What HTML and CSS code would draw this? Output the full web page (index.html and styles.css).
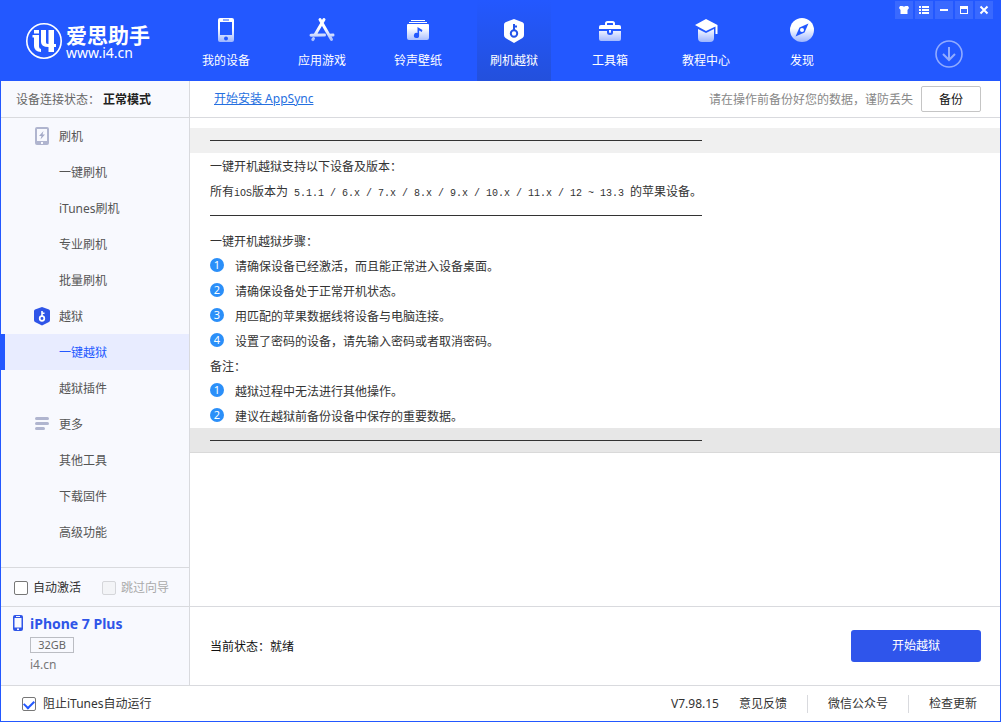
FILE: index.html
```html
<!DOCTYPE html>
<html lang="zh-CN">
<head>
<meta charset="utf-8">
<title>爱思助手</title>
<link rel="stylesheet" href="styles.css">
</head>
<body>
<div class="app">
  <header class="header">
    <div class="brand">
      <svg class="brand-mark" width="38" height="38" viewBox="0 0 38 38" fill="none" aria-hidden="true">
        <circle cx="19" cy="19" r="17.2" stroke="#fff" stroke-width="1.6"/>
        <path fill="#fff" d="M9 8h5v3.500H9zM7.500 13H14v11.500q0 2 2 2.500v3q-7-.500-7-6V15.500H7.500zM16 8h5v12.500q0 1.500 2.500 1.500V8H29v14h2v3h-2v5h-5.500v-5Q16 25 16 20z"/>
      </svg>
      <div class="brand-text">
        <span class="brand-name">爱思助手</span>
        <span class="brand-site">www.i4.cn</span>
      </div>
    </div>
    <nav class="tabs">
      <a class="tab" href="#device">
        <svg width="26" height="26" viewBox="0 0 26 26" aria-hidden="true">
          <defs><linearGradient id="fade" gradientUnits="userSpaceOnUse" x1="0" y1="2" x2="0" y2="25"><stop offset=".4" stop-color="#fff"/><stop offset="1" stop-color="#9db5ff"/></linearGradient></defs>
          <path fill="url(#fade)" fill-rule="evenodd" d="M7 1h12q2 0 2 2v20q0 2-2 2H7q-2 0-2-2V3q0-2 2-2zM7 5v13h12V5zM10 2.500v1h6v-1zM13 19.500a2 2 0 1 0 0 4a2 2 0 1 0 0-4z"/>
        </svg>
        <span>我的设备</span>
      </a>
      <a class="tab" href="#apps">
        <svg width="26" height="26" viewBox="0 0 26 26" fill="none" stroke="url(#fade)" stroke-width="3" stroke-linecap="round" aria-hidden="true">
          <path d="M15 2.500L6.500 17M11 2.500L22.500 22.500M4.500 21.500L3.800 22.600M2 18.200L15.500 18.100M20.500 18.200L24 18.100"/>
        </svg>
        <span>应用游戏</span>
      </a>
      <a class="tab" href="#ringtones">
        <svg width="26" height="26" viewBox="0 0 26 26" fill="url(#fade)" aria-hidden="true">
          <path d="M6 3h14v1H6zM4 5h18v1H4z"/>
          <path fill-rule="evenodd" d="M3 7h20q1 0 1 1v13q0 2-2 2H4q-2 0-2-2V8q0-1 1-1zM12.500 10v6.100a2.600 2.600 0 1 0 1.600 2.400v-5l2.800 1.500l.500-2z"/>
        </svg>
        <span>铃声壁纸</span>
      </a>
      <a class="tab tab-active" href="#flash" aria-current="page">
        <svg width="26" height="26" viewBox="0 0 26 26" aria-hidden="true">
          <path fill="#fff" d="M13 2l8.500 3.200Q23 6 23 7.500V18q0 2-1.500 3L13 26L4.500 21Q3 20 3 18V7.500Q3 6 4.500 5.200z"/>
          <path fill="none" stroke="#2354ea" stroke-width="2" d="M13 14V7M13 9.500h3"/>
          <circle cx="13" cy="16.500" r="3.200" fill="none" stroke="#2354ea" stroke-width="2"/>
        </svg>
        <span>刷机越狱</span>
      </a>
      <a class="tab" href="#toolbox">
        <svg width="26" height="26" viewBox="0 0 26 26" aria-hidden="true">
          <path fill="none" stroke="#fff" stroke-width="2" d="M9 8V6.500Q9 5 10.500 5h5Q17 5 17 6.500V8"/>
          <path fill="#fff" d="M4 8h18q2 0 2 2v2H2v-2q0-2 2-2z"/>
          <path fill="url(#fade)" d="M2 14h8v1.500q0 2.500 3 2.500t3-2.500V14h8v8q0 2-2 2H4q-2 0-2-2zM12 13h2v2q0 1-1 1t-1-1z"/>
        </svg>
        <span>工具箱</span>
      </a>
      <a class="tab" href="#tutorials">
        <svg width="26" height="26" viewBox="0 0 26 26" aria-hidden="true">
          <path fill="#fff" d="M13 2L24.500 8V17H22.500V9.500L13 14L2 8z"/>
          <path fill="url(#fade)" d="M5 12l8 4l8-4v9q0 4-4 4H9q-4 0-4-4z"/>
        </svg>
        <span>教程中心</span>
      </a>
      <a class="tab" href="#discover">
        <svg width="26" height="26" viewBox="0 0 26 26" aria-hidden="true">
          <circle cx="13" cy="13" r="12" fill="url(#fade)"/>
          <path fill="#2358ff" d="M19.500 6.500L15.500 15.500L6.500 19.500L10.500 10.500z"/>
          <circle cx="13" cy="13" r="2" fill="#fff"/>
        </svg>
        <span>发现</span>
      </a>
    </nav>
    <div class="header-side">
      <div class="window-controls">
        <button type="button" aria-label="皮肤"><svg width="10" height="10" viewBox="0 0 10 10" fill="#fff"><path d="M1 1h2.500q1.500 1 3 0H9l1 2-1.500 2v4h-7V5L0 3z"/></svg></button>
        <button type="button" aria-label="菜单"><svg width="10" height="10" viewBox="0 0 10 10" fill="#fff"><path d="M0 1h2v2H0zM3 1h7v2H3zM0 4h2v2H0zM3 4h7v2H3zM0 7h2v2H0zM3 7h7v2H3z"/></svg></button>
        <button type="button" aria-label="最小化"><svg width="10" height="10" viewBox="0 0 10 10" fill="#fff"><path d="M1 4h8v2H1z"/></svg></button>
        <button type="button" aria-label="最大化"><svg width="10" height="10" viewBox="0 0 10 10" fill="#fff"><path fill-rule="evenodd" d="M1 1h8v8H1zM2 4v4h6V4z"/></svg></button>
        <button type="button" aria-label="关闭"><svg width="10" height="10" viewBox="0 0 10 10" fill="none" stroke="#fff" stroke-width="2"><path d="M1.500 1.500l7 7M8.500 1.500l-7 7"/></svg></button>
      </div>
      <button class="download" type="button" aria-label="下载"><svg width="28" height="28" viewBox="0 0 28 28" fill="none" stroke="#91abff" stroke-width="1.600"><circle cx="14" cy="14" r="13"/><path d="M14 7v13M8 14l6 6 6-6" stroke-width="2"/></svg></button>
    </div>
  </header>

  <div class="body">
    <aside class="sidebar">
      <div class="connection"><span>设备连接状态：</span><strong>正常模式</strong></div>
      <nav class="menu">
        <a class="group" href="#flash">
          <svg width="16" height="20" viewBox="0 0 16 20" aria-hidden="true"><path fill="#b0b5cf" fill-rule="evenodd" d="M3 0h10q2 0 2 2v14q0 2-2 2H3q-2 0-2-2V2q0-2 2-2zM3 2v12h10V2zM7 15v2h2v-2z"/><path fill="#a5abc8" d="M9.500 4L5 9h2.500L6.500 12.500L11 7.500H8.500z"/></svg>
          <span>刷机</span></a>
        <a href="#one-key-flash">一键刷机</a>
        <a href="#itunes-flash">iTunes刷机</a>
        <a href="#pro-flash">专业刷机</a>
        <a href="#batch-flash">批量刷机</a>
        <a class="group" href="#jailbreak">
          <svg width="16" height="20" viewBox="0 0 16 20" aria-hidden="true"><path fill="#2f55e8" d="M8 0l7 2.500q1 .500 1 1.500V13q0 1.500-1 2l-7 3.500L1 15q-1-.500-1-2V4Q0 3 1 2.500z"/><path fill="none" stroke="#fff" stroke-width="1.600" d="M8 9.500V4M8 6.300h2.500"/><circle cx="8" cy="11.500" r="2.300" fill="none" stroke="#fff" stroke-width="1.700"/></svg>
          <span>越狱</span></a>
        <a class="selected" href="#one-key-jailbreak" aria-current="page">一键越狱</a>
        <a href="#plugins">越狱插件</a>
        <a class="group" href="#more">
          <svg width="16" height="20" viewBox="0 0 16 20" fill="#b0b5cf" aria-hidden="true"><rect x="1" y="2" width="14" height="3" rx="1.500"/><rect x="1" y="7" width="14" height="3" rx="1.500"/><rect x="1" y="12" width="10" height="3" rx="1.500"/></svg>
          <span>更多</span></a>
        <a href="#tools">其他工具</a>
        <a href="#firmware">下载固件</a>
        <a href="#advanced">高级功能</a>
      </nav>
      <div class="options">
        <label class="check"><input type="checkbox">自动激活</label>
        <label class="check check-off"><input type="checkbox" disabled>跳过向导</label>
      </div>
      <div class="device">
        <svg width="12" height="18" viewBox="0 0 12 18" aria-hidden="true"><path fill="#2f55e8" fill-rule="evenodd" d="M3 1h6q2 0 2 2v12q0 2-2 2H3q-2 0-2-2V3q0-2 2-2zM2.500 4v9.500h7V4zM4 2v1h4V2zM5 14.500V16h2v-1.500z"/></svg>
        <div class="device-info">
          <strong class="device-name">iPhone 7 Plus</strong>
          <span class="capacity">32GB</span>
          <span class="device-site">i4.cn</span>
        </div>
      </div>
    </aside>

    <main class="main">
      <div class="toolbar">
        <a href="#appsync">开始安装 AppSync</a>
        <span class="notice">请在操作前备份好您的数据，谨防丢失</span>
        <button class="backup" type="button">备份</button>
      </div>
      <article class="guide">
        <div class="rule-row band-top"><hr></div>
        <p>一键开机越狱支持以下设备及版本：</p>
        <p>所有<span class="mono">iOS</span>版本为<span class="mono"> 5.1.1 / 6.x / 7.x / 8.x / 9.x / 10.x / 11.x / 12 ~ 13.3 </span>的苹果设备。</p>
        <div class="rule-row"><hr></div>
        <p>一键开机越狱步骤：</p>
        <ol class="steps">
          <li><span class="num">1</span>请确保设备已经激活，而且能正常进入设备桌面。</li>
          <li><span class="num">2</span>请确保设备处于正常开机状态。</li>
          <li><span class="num">3</span>用匹配的苹果数据线将设备与电脑连接。</li>
          <li><span class="num">4</span>设置了密码的设备，请先输入密码或者取消密码。</li>
        </ol>
        <p>备注：</p>
        <ol class="steps">
          <li><span class="num">1</span>越狱过程中无法进行其他操作。</li>
          <li><span class="num">2</span>建议在越狱前备份设备中保存的重要数据。</li>
        </ol>
        <div class="rule-row band-bottom"><hr></div>
      </article>
      <section class="action">
        <span>当前状态：就绪</span>
        <button class="primary" type="button">开始越狱</button>
      </section>
    </main>
  </div>

  <footer class="footer">
    <label class="check"><input type="checkbox" checked>阻止iTunes自动运行</label>
    <div class="footer-links">
      <span class="version">V7.98.15</span>
      <a href="#feedback">意见反馈</a>
      <a href="#wechat">微信公众号</a>
      <a href="#update">检查更新</a>
    </div>
  </footer>
</div>
</body>
</html>
```
FILE: styles.css
```css
* { box-sizing: border-box; }

body {
  margin: 0;
  font: 12px/18px "Noto Sans", "Noto Sans CJK SC", sans-serif;
  color: #333;
}

a { color: inherit; text-decoration: none; }
button { font: inherit; cursor: pointer; }
svg { display: block; flex: none; }

.app {
  min-height: 100vh;
  display: flex;
  flex-direction: column;
  border: 1px solid #2358ff;
  border-top: 0;
  background: #fff;
}

/* Header */
.header {
  height: 81px;
  display: flex;
  background: #2358ff;
  color: #fff;
}
.brand {
  width: 188px;
  flex: none;
  display: flex;
  align-items: center;
  gap: 3px;
  padding-left: 24px;
}
.brand-text { display: flex; flex-direction: column; }
.brand-name { font: 700 21px/24px "Noto Sans CJK SC", sans-serif; }
.brand-site { font-size: 14px; line-height: 14px; }

.tabs { display: flex; gap: 22px; margin-left: 0; }
.tab {
  width: 74px;
  display: flex;
  flex-direction: column;
  align-items: center;
  gap: 9px;
  padding-top: 17px;
}
.tab-active { background: linear-gradient(#2358ff, #2350dc); }

.header-side {
  margin-left: auto;
  display: flex;
  flex-direction: column;
  align-items: flex-end;
  padding: 1px 7px 0 0;
}
.window-controls { display: flex; gap: 2px; }
.window-controls button {
  width: 18px;
  height: 18px;
  display: grid;
  place-items: center;
  padding: 0;
  border: 0;
  background: #3969ff;
}
.download { margin: 21px 30px 0 0; padding: 0; border: 0; background: none; }

/* Body */
.body { flex: 1; display: flex; }
.sidebar {
  width: 189px;
  flex: none;
  display: flex;
  flex-direction: column;
  border-right: 1px solid #d9dade;
  background: #f8f9fe;
}
.connection {
  height: 37px;
  display: flex;
  align-items: center;
  gap: 3px;
  padding: 2px 0 0 15px;
  border-bottom: 1px solid #d9dade;
  color: #666;
}
.connection strong { color: #222; }

.menu { flex: 1; display: flex; flex-direction: column; color: #555; }
.menu a {
  height: 36px;
  display: flex;
  align-items: center;
  padding: 2px 0 0 58px;
}
.menu .group { gap: 9px; padding-left: 33px; }
.menu .selected {
  padding-left: 54px;
  border-left: 4px solid #2358ff;
  background: #e8ecff;
  color: #2358ff;
}

.check { display: flex; align-items: center; gap: 5px; }
.check input {
  appearance: none;
  width: 14px;
  height: 14px;
  margin: 0;
  border: 1px solid #777;
  border-radius: 2px;
  background: #fff;
  display: grid;
  place-items: center;
}
.check input:checked::before {
  content: "";
  width: 8px;
  height: 5px;
  border: solid #2358ff;
  border-width: 0 0 2px 2px;
  transform: translateY(-1px) rotate(-45deg);
}
.check-off { color: #aaa; }
.check-off input { border-color: #d5d6da; background: #f3f4f7; }

.options {
  height: 39px;
  display: flex;
  align-items: center;
  gap: 21px;
  padding: 1px 0 0 13px;
  border-top: 1px solid #d9dade;
}
.device {
  height: 79px;
  display: flex;
  gap: 6px;
  padding: 7px 0 0 11px;
  border-top: 1px solid #d9dade;
}
.device-info { display: flex; flex-direction: column; align-items: flex-start; }
.device-name { font-size: 14px; line-height: 20px; color: #2f55e8; }
.capacity {
  width: 44px;
  margin: 3px 0;
  border: 1px solid #bbbdc3;
  font-size: 11px;
  line-height: 14px;
  text-align: center;
  color: #666;
}
.device-site { color: #777; }

.main { flex: 1; min-width: 0; display: flex; flex-direction: column; }
.toolbar {
  height: 37px;
  display: flex;
  align-items: center;
  gap: 8px;
  padding: 0 19px 0 24px;
  border-bottom: 1px solid #d9dade;
}
.toolbar a { color: #2670e0; text-decoration: underline; }
.notice { margin-left: auto; padding-top: 2px; color: #888; }
.backup {
  width: 60px;
  height: 26px;
  padding: 2px 0 0;
  border: 1px solid #c5c5c5;
  border-radius: 2px;
  background: #fff;
  color: #111;
}

.guide { flex: 1; padding-top: 10px; }
.guide p { margin: 0; padding: 2px 0 0 20px; line-height: 23px; }
.mono { font: 10px "Liberation Mono", monospace; white-space: pre; }
.rule-row { height: 25px; display: flex; align-items: center; padding-left: 20px; }
.rule-row hr { width: 492px; margin: 0; border: 0; border-top: 1px solid #333; }
.band-top { background: #f0f0f0; }
.band-bottom { background: #e7e7e7; border-bottom: 1px solid #d9d9d9; }
.steps { margin: 0; padding: 0 0 0 20px; list-style: none; }
.steps li { height: 25px; display: flex; align-items: center; gap: 11px; padding-top: 2px; }
.num {
  width: 14px;
  height: 14px;
  margin-bottom: 4px;
  border-radius: 50%;
  background: #2b8ff9;
  color: #fff;
  font-size: 11px;
  line-height: 14px;
  text-align: center;
}

.action {
  height: 79px;
  display: flex;
  align-items: center;
  justify-content: space-between;
  padding: 0 19px 0 20px;
  border-top: 1px solid #d9dade;
  color: #111;
}
.action span { padding-top: 2px; }
.primary {
  width: 130px;
  height: 32px;
  padding: 0;
  border: 0;
  border-radius: 3px;
  background: #2f55eb;
  color: #fff;
}

.footer {
  height: 36px;
  display: flex;
  align-items: center;
  justify-content: space-between;
  padding: 1px 23px 0 21px;
  border-top: 1px solid #d9dade;
}
.footer .check { gap: 7px; }
.footer-links { display: flex; align-items: center; }
.version { margin-right: 20px; }
.footer-links a + a {
  margin-left: 20px;
  padding-left: 20px;
  border-left: 1px solid #d9dade;
}
```
